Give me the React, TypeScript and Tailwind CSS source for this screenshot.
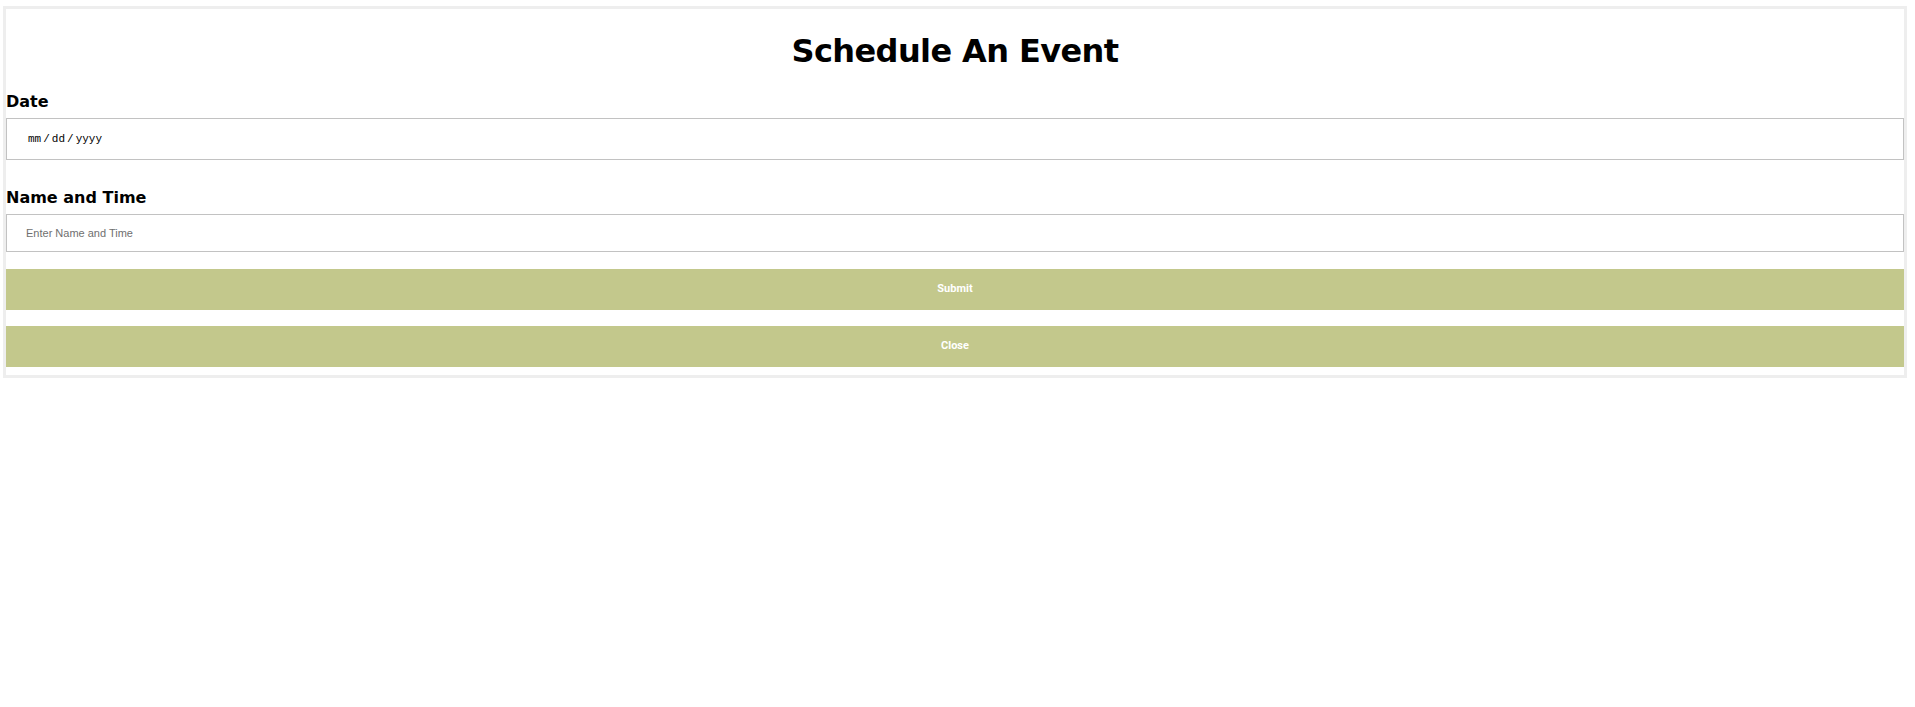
import { useState } from "react";

export default function App() {
  const [name, setName] = useState("");

  return (
    <div className="min-h-screen bg-white">
      <div className="ml-[3px] mt-[6px] w-[1904px] border-[3px] border-[#eeeeee] pb-[8px]">
        {/* Heading */}
        <h1 className="mt-[24px] text-center font-['DejaVu_Sans',Verdana,sans-serif] text-[32px] leading-[37px] font-bold tracking-[-0.6px] text-black">
          Schedule An Event
        </h1>

        <form onSubmit={(e) => e.preventDefault()} className="flex flex-col">
          <label className="mt-[22px] font-['DejaVu_Sans',Verdana,sans-serif] text-[16px] leading-[19px] font-bold text-black">
            Date
          </label>
          <div className="mt-[7px] flex h-[42px] items-center gap-[2px] border border-[#c2c2c2] bg-white pl-[21px] font-['Liberation_Mono','Courier_New',monospace] text-[11px] text-black">
            <span>mm</span>
            <span>/</span>
            <span>dd</span>
            <span>/</span>
            <span>yyyy</span>
          </div>

          <label className="mt-[28px] font-['DejaVu_Sans',Verdana,sans-serif] text-[16px] leading-[19px] font-bold text-black">
            Name and Time
          </label>
          <input
            type="text"
            value={name}
            onChange={(e) => setName(e.target.value)}
            placeholder="Enter Name and Time"
            className="mt-[7px] h-[38px] border border-[#c2c2c2] bg-white pl-[19px] font-['Liberation_Sans',Arial,sans-serif] text-[11px] text-black placeholder:text-[#6f6f6f] focus:outline-none"
          />

          <button
            type="submit"
            className="mt-[17px] h-[41px] bg-[#c3c88c] font-['Roboto','Liberation_Sans',Arial,sans-serif] text-[11px] font-bold text-white"
          >
            Submit
          </button>
          <button
            type="button"
            className="mt-[16px] h-[41px] bg-[#c3c88c] font-['Roboto','Liberation_Sans',Arial,sans-serif] text-[11px] font-bold text-white"
          >
            Close
          </button>
        </form>
      </div>
    </div>
  );
}
